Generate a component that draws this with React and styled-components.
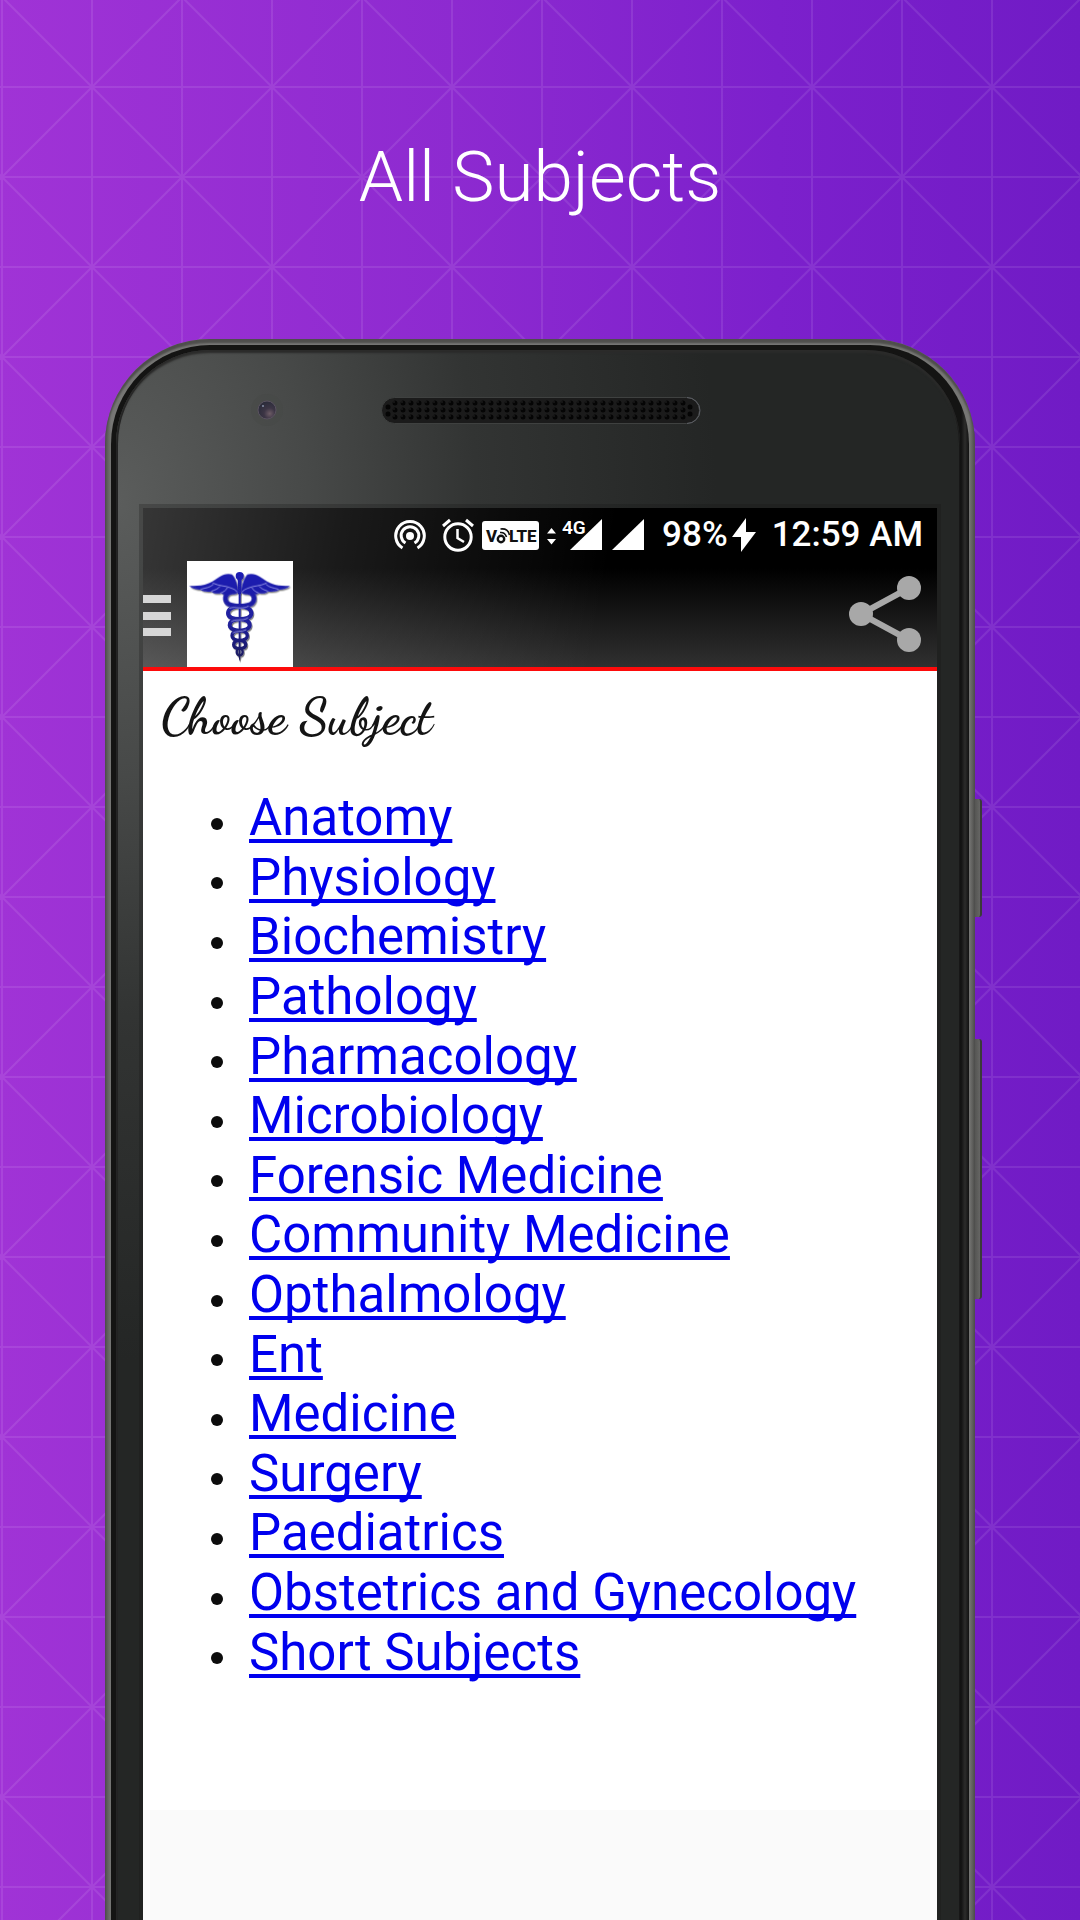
import styled, { createGlobalStyle } from "styled-components";

const GlobalStyle = createGlobalStyle`
    * { box-sizing: border-box; margin: 0; padding: 0; }
    body { font-family: Roboto, sans-serif; }
`

const PageStyled = styled.main`
    position: relative;
    min-height: 100vh;
    overflow: hidden;
    display: flex;
    flex-direction: column;
    align-items: center;
    background: linear-gradient(90deg, #a033d6 0%, #8d2ad0 42%, #7c20cc 72%, #701bc5 100%);
`

const Pattern = styled.svg`
    position: absolute;
    inset: 0;
    width: 100%;
    height: 100%;
`

const Title = styled.h1`
    position: relative;
    padding: 134px 0 120px;
    color: #fff;
    font-size: 71px;
    font-weight: 300;
    line-height: 85px;
    white-space: nowrap;
`

const Phone = styled.section`
    position: relative;
    flex: 1;
    width: 100%;
    max-width: 870px;
    padding: 6px 6px 0;
    border-radius: 105px 105px 0 0;
    background: linear-gradient(90deg, #4d4d4b 0, #777775 6px, #777775 calc(100% - 6px), #4d4d4b 100%);
    box-shadow: inset 0 4px 2px #4e4e4c;
    display: flex;
`

const SideKey = styled.span`
    position: absolute;
    left: 100%;
    top: ${({ $top }) => $top}px;
    width: 7px;
    height: ${({ $height }) => $height}px;
    border-radius: 0 3px 3px 0;
    border-right: 2px solid #3a3a3a;
    background: linear-gradient(90deg, #555553, #666664);
`

const Rim = styled.div`
    flex: 1;
    min-width: 0;
    padding: 5px 9px 0 5px;
    border-radius: 99px 99px 0 0;
    background: linear-gradient(90deg, #141413 0, #141413 calc(100% - 9px), #111 calc(100% - 8px), #2c2c2b calc(100% - 4px), #121212 100%);
    display: flex;
`

const Body = styled.div`
    flex: 1;
    min-width: 0;
    padding: 0 23px 0 27px;
    border-radius: 94px 94px 0 0;
    background: radial-gradient(ellipse 600px 860px at 0 150px, #5b5d5c 0, #474948 32%, #323433 60%, #242625 100%);
    box-shadow: inset 0 3px 2px #2b2b2a, inset -1px 0 0 #111, inset 2px 0 0 #222;
    display: flex;
    flex-direction: column;
`

const Top = styled.div`
    height: 158px;
    padding: 44px 0 0 108px;
    display: flex;
    align-items: flex-start;
    gap: 98px;
`

const Screen = styled.div`
    flex: 1;
    background: #fafafa;
    box-shadow: 0 0 0 4px rgba(20, 20, 20, .25);
`

const Header = styled.header`
    height: 163px;
    border-bottom: 4px solid #fd0b0b;
    background:
        linear-gradient(100deg, rgba(255, 255, 255, .21) 0, rgba(255, 255, 255, .1) 25%, rgba(255, 255, 255, 0) 58%),
        linear-gradient(180deg, #000 0, #000 38%, #303030 100%);
    display: flex;
    flex-direction: column;
`

const StatusBar = styled.div`
    height: 53px;
    padding: 0 14px;
    display: flex;
    align-items: center;
    justify-content: flex-end;
    color: #fff;
    font-size: 35px;
    font-weight: 500;
    white-space: nowrap;
`

const StatusIcon = styled.svg`
    flex: none;
    width: ${({ $width }) => $width}px;
    height: 36px;
    margin-right: ${({ $gap }) => $gap}px;
`

const Battery = styled.span`
    margin-right: 4px;
`

const Toolbar = styled.div`
    flex: 1;
    padding-right: 16px;
    display: flex;
    align-items: center;
`

const IconButton = styled.button`
    border: 0;
    background: none;
    display: flex;
    cursor: pointer;
`

const Logo = styled.svg`
    width: 106px;
    height: 106px;
    margin: 0 auto 0 16px;
    background: #fff;
`

const Content = styled.div`
    height: 1139px;
    padding: 16px 0 0 18px;
    background: #fff;
`

const Heading = styled.h2`
    font-family: "Dancing Script", "Liberation Serif", cursive;
    font-size: 51px;
    font-weight: 700;
    line-height: 60px;
    color: #141414;
`

const List = styled.ul`
    list-style: none;
    height: 894px;
    margin: 41px 0 0 50px;
    display: grid;
    grid-auto-rows: 1fr;
    font-size: 51px;
    line-height: 59px;
`

const Item = styled.li`
    display: flex;
    gap: 26px;
    align-items: center;
    &::before{
        content: "";
        width: 12px;
        height: 12px;
        margin-top: 12px;
        border-radius: 50%;
        background: #0c0c0c;
    }
`

const Link = styled.a`
    color: #0000ee;
    white-space: nowrap;
    text-decoration-thickness: 4px;
    text-underline-offset: 4px;
    text-decoration-skip-ink: none;
`

const subjects = [
    "Anatomy", "Physiology", "Biochemistry", "Pathology", "Pharmacology",
    "Microbiology", "Forensic Medicine", "Community Medicine", "Opthalmology",
    "Ent", "Medicine", "Surgery", "Paediatrics", "Obstetrics and Gynecology",
    "Short Subjects"
]

function Camera() {
    return (
        <svg width="32" height="32" viewBox="0 0 32 32" aria-hidden="true">
            <defs>
                <radialGradient id="lens" cx="65%" cy="70%" r="70%">
                    <stop offset="0" stopColor="#6d5c66" />
                    <stop offset=".45" stopColor="#3c3545" />
                    <stop offset="1" stopColor="#2b2c3a" />
                </radialGradient>
            </defs>
            <circle cx="16" cy="16" r="16" fill="#464847" opacity=".4" />
            <circle cx="16" cy="16" r="9" fill="url(#lens)" stroke="#5a5260" strokeWidth="1" />
            <circle cx="12" cy="12" r="1" fill="#8890a8" />
        </svg>
    )
}

function Speaker() {
    return (
        <svg width="320" height="32" viewBox="0 0 320 32" aria-hidden="true">
            <defs>
                <pattern id="holes" x="10" y="5" width="8" height="7" patternUnits="userSpaceOnUse">
                    <circle cx="4" cy="4" r="2.5" fill="#050505" />
                    <circle cx="3" cy="3" r=".7" fill="#2e2e2e" />
                </pattern>
            </defs>
            <rect x=".5" y="3.5" width="318" height="26" rx="13" fill="#1b1b1b" stroke="#3f4140" />
            <path d="M306 3.500A13 13 0 0 1 306 29.500" fill="none" stroke="#5c5e64" />
            <rect x="10" y="5" width="296" height="21" fill="url(#holes)" />
            <g fill="#050505">
                <circle cx="7" cy="13" r="2.500" />
                <circle cx="7" cy="20" r="2.500" />
                <circle cx="309" cy="13" r="2.500" />
                <circle cx="309" cy="20" r="2.500" />
            </g>
        </svg>
    )
}

function StatusIcons() {
    return (
        <>
            <StatusIcon $width={32} $gap={16} viewBox="0 0 32 36" aria-hidden="true">
                <g fill="none" stroke="#fff" strokeWidth="3">
                    <path d="M8.500 31A14.300 14.300 0 1 1 23.500 31" />
                    <path d="M11.500 26A8.800 8.800 0 1 1 20.500 26" />
                </g>
                <circle cx="16" cy="19" r="4" fill="#fff" />
            </StatusIcon>
            <StatusIcon $width={32} $gap={8} viewBox="0 0 32 36" aria-hidden="true">
                <g fill="none" stroke="#fff" strokeWidth="3">
                    <circle cx="16" cy="20" r="13.200" />
                    <path d="M1 9L8 3M31 9L24 3" />
                    <path d="M15.500 12V21L22 25" strokeWidth="2.500" />
                </g>
            </StatusIcon>
            <StatusIcon $width={57} $gap={8} viewBox="0 0 57 36">
                <rect y="4" width="57" height="29" rx="3" fill="#fff" />
                <g fill="#111" fontFamily="Roboto, sans-serif" fontWeight="800">
                    <text x="4" y="25" fontSize="17">V</text>
                    <text x="27" y="25" fontSize="17">LTE</text>
                </g>
                <circle cx="19" cy="22" r="3.200" fill="none" stroke="#111" strokeWidth="2.400" />
                <path d="M18 15.500Q23 15 24.500 20M18.500 12Q26 11 27.500 18" fill="none" stroke="#111" strokeWidth="1.600" />
            </StatusIcon>
            <StatusIcon $width={9} $gap={6} viewBox="0 0 9 36" aria-hidden="true">
                <path d="M0 16.500L4.500 11L9 16.500ZM0 22L4.500 27.500L9 22Z" fill="#fff" />
            </StatusIcon>
            <StatusIcon $width={40} $gap={10} viewBox="0 0 40 36">
                <path d="M8 33L40 2V33Z" fill="#fff" />
                <text x="0" y="17" fontSize="19" fontWeight="600" fontFamily="Roboto, sans-serif" fill="#fff" stroke="#000" strokeWidth="2" paintOrder="stroke">4G</text>
            </StatusIcon>
            <StatusIcon $width={32} $gap={18} viewBox="0 0 32 36" aria-hidden="true">
                <path d="M0 33L32 2V33Z" fill="#fff" />
            </StatusIcon>
            <Battery>98%</Battery>
            <StatusIcon $width={24} $gap={16} viewBox="0 0 24 36" aria-hidden="true">
                <path d="M14 1L0 20H9V35L24 15H14Z" fill="#fff" />
            </StatusIcon>
        </>
    )
}

function Caduceus() {
    return (
        <Logo viewBox="21 18 318 318" role="img" aria-label="Caduceus">
            <defs>
                <linearGradient id="ink" x1="0" y1="50" x2="0" y2="318" gradientUnits="userSpaceOnUse">
                    <stop offset="0" stopColor="#1f1fb4" />
                    <stop offset=".6" stopColor="#20209a" />
                    <stop offset="1" stopColor="#1c1c58" />
                </linearGradient>
                <filter id="drop" x="-10%" y="-10%" width="120%" height="120%">
                    <feDropShadow dx="3" dy="4" stdDeviation="1.500" floodColor="#000" floodOpacity=".5" />
                </filter>
                <g id="side">
                    <path d="M176 112C172 90 168 72 156 58C142 54 130 58 118 66C104 76 92 84 74 89C60 93 44 92 28 93C36 101 50 104 62 104C70 110 84 111 94 109C102 116 114 117 122 114C132 121 140 118 148 116C158 118 168 116 176 112Z" />
                    <path d="M168 110C152 110 136 114 136 130C136 147 150 152 178 153" fill="none" stroke="url(#ink)" strokeWidth="14" />
                </g>
            </defs>
            <g fill="url(#ink)" filter="url(#drop)">
                <use href="#side" />
                <use href="#side" transform="translate(358 0) scale(-1 1)" />
                <circle cx="179" cy="63" r="12" />
                <path d="M173 70H185L183 118H182L181 306L179 320L176 306V118H174Z" />
                <g fill="none" stroke="url(#ink)" strokeWidth="12">
                    <path d="M178 153C202 155 214 163 214 175C214 188 200 192 179 192C158 193 149 201 149 211C149 222 160 226 179 227" />
                    <path d="M180 153C156 155 144 163 144 175C144 188 158 192 179 192C200 193 209 201 209 211C209 222 198 226 179 227" />
                    <path d="M179 227C196 228 202 234 202 242C202 251 194 255 179 256C166 257 161 262 161 269C161 276 168 280 179 280" strokeWidth="10" />
                    <path d="M179 227C162 228 156 234 156 242C156 251 164 255 179 256C192 257 197 262 197 269C197 276 190 280 179 280" strokeWidth="10" />
                    <ellipse cx="179" cy="291" rx="9" ry="10" strokeWidth="7" />
                </g>
            </g>
            <g fill="none" stroke="#c9c9ff" strokeWidth="2">
                <path d="M98 84C118 94 138 92 150 98C160 102 168 104 172 112M62 103C78 98 90 98 100 88M94 109C106 104 114 102 120 94M122 114C132 110 138 106 142 98" />
                <path d="M260 84C240 94 220 92 208 98C198 102 190 104 186 112M296 103C280 98 268 98 258 88M264 109C252 104 244 102 238 94M236 114C226 110 220 106 216 98" />
                <path d="M148 160C164 152 184 166 206 153M154 200C166 190 190 200 204 188M158 234C170 226 186 232 199 224" />
            </g>
        </Logo>
    )
}

export default function App() {
    return (
        <PageStyled>
            <GlobalStyle />
            <Pattern aria-hidden="true">
                <defs>
                    <pattern id="grid" x="2" y="-3" width="180" height="180" patternUnits="userSpaceOnUse">
                        <path d="M0 0H180V180H0ZM0 90H180M90 0V180M0 0L180 180M180 0L0 180" fill="none" stroke="#fff" strokeOpacity=".09" strokeWidth="2" />
                    </pattern>
                </defs>
                <rect width="100%" height="100%" fill="url(#grid)" />
            </Pattern>
            <Title>All Subjects</Title>
            <Phone>
                <SideKey $top={460} $height={118} />
                <SideKey $top={700} $height={260} />
                <Rim>
                    <Body>
                        <Top>
                            <Camera />
                            <Speaker />
                        </Top>
                        <Screen>
                            <Header>
                                <StatusBar>
                                    <StatusIcons />
                                    <time>12:59 AM</time>
                                </StatusBar>
                                <Toolbar>
                                    <IconButton type="button" aria-label="Menu">
                                        <svg width="28" height="46" viewBox="0 0 28 46">
                                            <path d="M0 4H28V12H0ZM0 21H28V29H0ZM0 37H28V45H0Z" fill="#d6d6d6" />
                                        </svg>
                                    </IconButton>
                                    <Caduceus />
                                    <IconButton type="button" aria-label="Share">
                                        <svg width="72" height="76" viewBox="0 0 72 76">
                                            <path d="M60 12L12 38L60 64" fill="none" stroke="#a8a8a8" strokeWidth="6" />
                                            <g fill="#a8a8a8">
                                                <circle cx="60" cy="12" r="12" />
                                                <circle cx="12" cy="38" r="12" />
                                                <circle cx="60" cy="64" r="12" />
                                            </g>
                                        </svg>
                                    </IconButton>
                                </Toolbar>
                            </Header>
                            <Content>
                                <Heading>Choose Subject</Heading>
                                <List>
                                    {subjects.map((name) => (
                                        <Item key={name}><Link href="#">{name}</Link></Item>
                                    ))}
                                </List>
                            </Content>
                        </Screen>
                    </Body>
                </Rim>
            </Phone>
        </PageStyled>
    )
}
